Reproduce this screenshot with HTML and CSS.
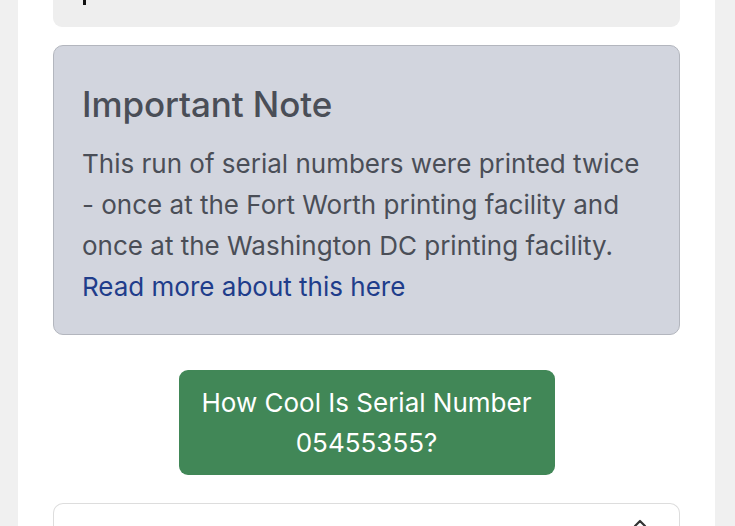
FILE: index.html
```html
<!DOCTYPE html>
<html>
<head>
<meta charset="utf-8">
<link rel="stylesheet" href="styles.css">
</head>
<body>
<div class="page">
  <main class="column">
    <div class="top-card"><span class="glyph-tail"></span></div>
    <section class="note">
      <h2 class="note-title">Important Note</h2>
      <p class="note-text">This run of serial numbers were printed twice - once at the Fort Worth printing facility and once at the Washington DC printing facility. <a class="note-link" href="#">Read more about this here</a></p>
    </section>
    <div class="cta-row">
      <a class="cta" href="#">How Cool Is Serial Number 05455355?</a>
    </div>
    <div class="bottom-card">
      <svg class="chevron" width="14" height="10" viewBox="0 0 14 10"><path d="M2 8 L7 3 L12 8" fill="none" stroke="#333" stroke-width="2.2" stroke-linecap="round" stroke-linejoin="round"/></svg>
    </div>
  </main>
</div>
</body>
</html>
```

FILE: styles.css
```css
html, body {
  margin: 0;
  padding: 0;
}
body {
  background: #f0f0f0;
  font-family: Inter, "Noto Sans", "Liberation Sans", sans-serif;
  height: 526px;
  overflow: hidden;
}
.page {
  padding-left: 18px;
}
.column {
  width: 627px;
  background: #ffffff;
  padding: 0 35px;
  height: 526px;
  display: flex;
  flex-direction: column;
}
.top-card {
  height: 27px;
  background: #eeeeee;
  border-radius: 0 0 9px 9px;
  position: relative;
  flex: none;
}
.glyph-tail {
  position: absolute;
  left: 30px;
  top: 0;
  width: 3px;
  height: 5px;
  background: #111;
}
.note {
  margin-top: 18px;
  background: #d2d5de;
  border: 1.5px solid #b3b6be;
  border-radius: 10px;
  padding: 37px 28px 0 28px;
  box-sizing: border-box;
  height: 290px;
  flex: none;
}
.note-title {
  margin: 0;
  font-size: 35px;
  font-weight: 500;
  color: #4a4e57;
  line-height: 42px;
  letter-spacing: -0.1px;
}
.note-text {
  margin: 18px 0 0 0;
  font-size: 26px;
  line-height: 41px;
  color: #4a4e57;
}
.note-link {
  color: #1f3d8b;
  text-decoration: none;
}
.cta-row {
  display: flex;
  justify-content: center;
  margin-top: 35px;
  flex: none;
}
.cta {
  width: 376px;
  height: 105px;
  box-sizing: border-box;
  background: #418757;
  border-radius: 9px;
  color: #ffffff;
  text-decoration: none;
  font-size: 26px;
  line-height: 40px;
  text-align: center;
  padding: 13px 18px 0;
}
.bottom-card {
  margin-top: 28px;
  flex: 1;
  border: 1.5px solid #dddddd;
  border-bottom: none;
  border-radius: 10px 10px 0 0;
  position: relative;
}
.chevron {
  position: absolute;
  right: 32px;
  top: 14px;
}
```
